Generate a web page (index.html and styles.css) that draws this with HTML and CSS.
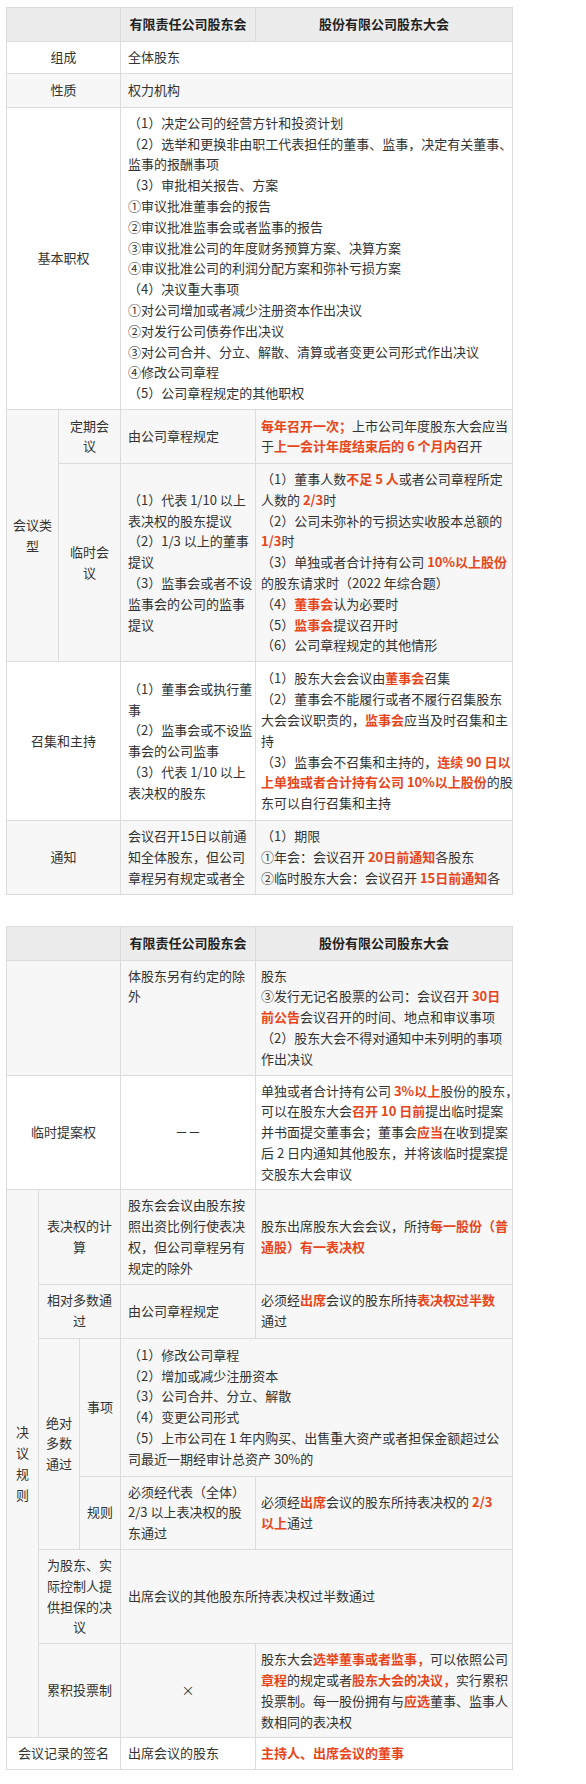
FILE: index.html
```html
<!DOCTYPE html>
<html lang="zh-CN">
<head>
<meta charset="utf-8">
<title>有限责任公司股东会与股份有限公司股东大会</title>
<link rel="stylesheet" href="styles.css">
</head>
<body>
<table class="tbl t1">
  <colgroup>
    <col class="w52"><col class="w62"><col class="w135"><col class="w257">
  </colgroup>
  <tr class="head">
    <th colspan="2"></th>
    <th>有限责任公司股东会</th>
    <th>股份有限公司股东大会</th>
  </tr>
  <tr>
    <td colspan="2" class="lab">组成</td>
    <td colspan="2" class="c2">全体股东</td>
  </tr>
  <tr class="alt h34">
    <td colspan="2" class="lab">性质</td>
    <td colspan="2" class="c2">权力机构</td>
  </tr>
  <tr>
    <td colspan="2" class="lab">基本职权</td>
    <td colspan="2" class="c2">（1）决定公司的经营方针和投资计划<br>（2）选举和更换非由职工代表担任的董事、监事，决定有关董事、<br>监事的报酬事项<br>（3）审批相关报告、方案<br>①审议批准董事会的报告<br>②审议批准监事会或者监事的报告<br>③审议批准公司的年度财务预算方案、决算方案<br>④审议批准公司的利润分配方案和弥补亏损方案<br>（4）决议重大事项<br>①对公司增加或者减少注册资本作出决议<br>②对发行公司债券作出决议<br>③对公司合并、分立、解散、清算或者变更公司形式作出决议<br>④修改公司章程<br>（5）公司章程规定的其他职权</td>
  </tr>
  <tr class="alt h54">
    <td rowspan="2" class="lab nar">会议类<br>型</td>
    <td class="lab nar">定期会<br>议</td>
    <td class="c2">由公司章程规定</td>
    <td class="c3"><span class="hl">每年召开一次；</span>上市公司年度股东大会应当<br>于<span class="hl">上一会计年度结束后的 6 个月内</span>召开</td>
  </tr>
  <tr class="alt">
    <td class="lab nar">临时会<br>议</td>
    <td class="c2">（1）代表 1/10 以上<br>表决权的股东提议<br>（2）1/3 以上的董事<br>提议<br>（3）监事会或者不设<br>监事会的公司的监事<br>提议</td>
    <td class="c3">（1）董事人数<span class="hl">不足 5 人</span>或者公司章程所定<br>人数的 <span class="hl">2/3</span>时<br>（2）公司未弥补的亏损达实收股本总额的<br><span class="hl">1/3</span>时<br>（3）单独或者合计持有公司 <span class="hl">10%以上股份</span><br>的股东请求时（2022 年综合题）<br>（4）<span class="hl">董事会</span>认为必要时<br>（5）<span class="hl">监事会</span>提议召开时<br>（6）公司章程规定的其他情形</td>
  </tr>
  <tr class="h159">
    <td colspan="2" class="lab">召集和主持</td>
    <td class="c2">（1）董事会或执行董<br>事<br>（2）监事会或不设监<br>事会的公司监事<br>（3）代表 1/10 以上<br>表决权的股东</td>
    <td class="c3">（1）股东大会会议由<span class="hl">董事会</span>召集<br>（2）董事会不能履行或者不履行召集股东<br>大会会议职责的，<span class="hl">监事会</span>应当及时召集和主<br>持<br>（3）监事会不召集和主持的，<span class="hl">连续 90 日以</span><br><span class="hl">上单独或者合计持有公司 10%以上股份</span>的股<br>东可以自行召集和主持</td>
  </tr>
  <tr class="alt">
    <td colspan="2" class="lab">通知</td>
    <td class="c2">会议召开15日以前通<br>知全体股东，但公司<br>章程另有规定或者全</td>
    <td class="c3">（1）期限<br>①年会：会议召开 <span class="hl">20日前通知</span>各股东<br>②临时股东大会：会议召开 <span class="hl">15日前通知</span>各</td>
  </tr>
</table>

<table class="tbl t2">
  <colgroup>
    <col class="w32"><col class="w41"><col class="w41"><col class="w135"><col class="w257">
  </colgroup>
  <tr class="head">
    <th colspan="3"></th>
    <th>有限责任公司股东会</th>
    <th>股份有限公司股东大会</th>
  </tr>
  <tr class="alt">
    <td colspan="3" class="lab"></td>
    <td class="c2 top">体股东另有约定的除<br>外</td>
    <td class="c3">股东<br>③发行无记名股票的公司：会议召开 <span class="hl">30日</span><br><span class="hl">前公告</span>会议召开的时间、地点和审议事项<br>（2）股东大会不得对通知中未列明的事项<br>作出决议</td>
  </tr>
  <tr>
    <td colspan="3" class="lab">临时提案权</td>
    <td class="c2 mid">－－</td>
    <td class="c3">单独或者合计持有公司 <span class="hl">3%以上</span>股份的股东，<br>可以在股东大会<span class="hl">召开 10 日前</span>提出临时提案<br>并书面提交董事会；董事会<span class="hl">应当</span>在收到提案<br>后 2 日内通知其他股东，并将该临时提案提<br>交股东大会审议</td>
  </tr>
  <tr class="alt">
    <td rowspan="6" class="lab nar">决<br>议<br>规<br>则</td>
    <td colspan="2" class="lab nar">表决权的计<br>算</td>
    <td class="c2">股东会会议由股东按<br>照出资比例行使表决<br>权，但公司章程另有<br>规定的除外</td>
    <td class="c3">股东出席股东大会会议，所持<span class="hl">每一股份（普</span><br><span class="hl">通股）有一表决权</span></td>
  </tr>
  <tr class="alt h54">
    <td colspan="2" class="lab nar">相对多数通<br>过</td>
    <td class="c2">由公司章程规定</td>
    <td class="c3">必须经<span class="hl">出席</span>会议的股东所持<span class="hl">表决权过半数</span><br>通过</td>
  </tr>
  <tr class="alt h138">
    <td rowspan="2" class="lab nar">绝对<br>多数<br>通过</td>
    <td class="lab nar">事项</td>
    <td colspan="2" class="c2">（1）修改公司章程<br>（2）增加或减少注册资本<br>（3）公司合并、分立、解散<br>（4）变更公司形式<br>（5）上市公司在 1 年内购买、出售重大资产或者担保金额超过公<br>司最近一期经审计总资产 30%的</td>
  </tr>
  <tr class="alt">
    <td class="lab nar">规则</td>
    <td class="c2">必须经代表（全体）<br>2/3 以上表决权的股<br>东通过</td>
    <td class="c3">必须经<span class="hl">出席</span>会议的股东所持表决权的 <span class="hl">2/3</span><br><span class="hl">以上</span>通过</td>
  </tr>
  <tr class="alt">
    <td colspan="2" class="lab nar">为股东、实<br>际控制人提<br>供担保的决<br>议</td>
    <td colspan="2" class="c2">出席会议的其他股东所持表决权过半数通过</td>
  </tr>
  <tr class="alt">
    <td colspan="2" class="lab nar">累积投票制</td>
    <td class="c2 mid">×</td>
    <td class="c3">股东大会<span class="hl">选举董事或者监事，</span>可以依照公司<br><span class="hl">章程</span>的规定或者<span class="hl">股东大会的决议，</span>实行累积<br>投票制。每一股份拥有与<span class="hl">应选</span>董事、监事人<br>数相同的表决权</td>
  </tr>
  <tr>
    <td colspan="3" class="lab">会议记录的签名</td>
    <td class="c2">出席会议的股东</td>
    <td class="c3"><span class="hl">主持人、出席会议的董事</span></td>
  </tr>
</table>
</body>
</html>
```

FILE: styles.css
```css
* {
  box-sizing: border-box;
}

html, body {
  background: #ffffff;
}

body {
  margin: 0;
  padding: 7px 0 0 6px;
  font-family: "Noto Sans CJK SC", "Noto Sans", sans-serif;
  font-size: 13px;
  color: #333333;
}

.tbl {
  border-collapse: collapse;
  table-layout: fixed;
  width: 507px;
  line-height: 20.8px;
}

.t2 {
  margin-top: 31px;
}

.w32 { width: 32px; }
.w41 { width: 41px; }
.w52 { width: 52px; }
.w62 { width: 62px; }
.w135 { width: 135px; }
.w257 { width: 257px; }

.tbl th,
.tbl td {
  border: 1px solid #dcdcdc;
  padding: 5px 6px;
  vertical-align: middle;
  white-space: nowrap;
  text-align: left;
  font-weight: normal;
}

.tbl .head th {
  background: #ececec;
  font-weight: bold;
  text-align: center;
  color: #222222;
  height: 34px;
}

.tbl .alt td {
  background: #f6f7f6;
}

.tbl td.lab {
  text-align: center;
}

.tbl td.nar {
  padding-left: 2px;
  padding-right: 2px;
}

.tbl td.c2 {
  padding-left: 7px;
}

.tbl td.c3 {
  padding-left: 5px;
}

.tbl td.mid {
  text-align: center;
  padding-left: 6px;
}

.tbl td.top {
  vertical-align: top;
}

.h34 { height: 34px; }
.h54 { height: 54px; }
.h138 { height: 138px; }
.h159 { height: 159px; }

.hl {
  color: #e8461a;
  font-weight: bold;
}
```
